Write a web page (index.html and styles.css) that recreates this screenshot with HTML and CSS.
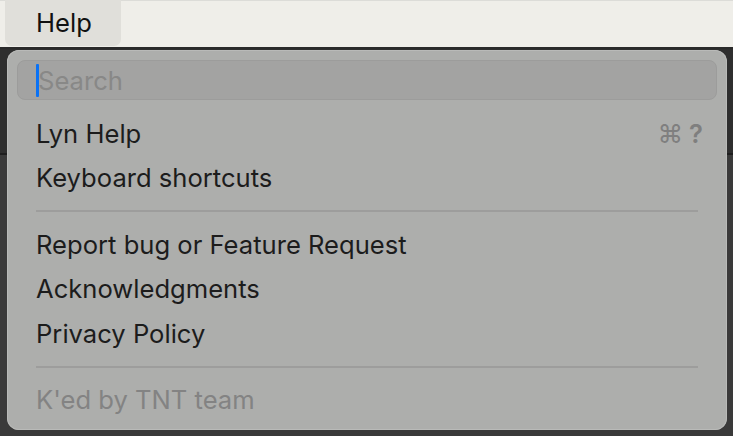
FILE: index.html
```html
<!DOCTYPE html>
<html>
<head>
<meta charset="utf-8">
<link rel="stylesheet" href="styles.css">
</head>
<body>
<div class="screen">
  <div class="menubar">
    <div class="menu-title">Help</div>
  </div>
  <div class="backdrop">
    <div class="panel">
      <div class="search">
        <span class="caret"></span>
        <span class="placeholder">Search</span>
      </div>
      <div class="group">
        <div class="item"><span class="label">Lyn Help</span><span class="shortcut"><span class="key">⌘</span><span class="key">?</span></span></div>
        <div class="item"><span class="label">Keyboard shortcuts</span></div>
      </div>
      <div class="sep"></div>
      <div class="group">
        <div class="item"><span class="label">Report bug or Feature Request</span></div>
        <div class="item"><span class="label">Acknowledgments</span></div>
        <div class="item"><span class="label">Privacy Policy</span></div>
      </div>
      <div class="sep"></div>
      <div class="group">
        <div class="item disabled"><span class="label">K'ed by TNT team</span></div>
      </div>
    </div>
  </div>
</div>
</body>
</html>
```
FILE: styles.css
```css
html, body {
  margin: 0;
  padding: 0;
}
body {
  width: 733px;
  height: 436px;
  overflow: hidden;
  background: #333333;
  font-family: Inter, "Liberation Sans", sans-serif;
}
.screen {
  display: flex;
  flex-direction: column;
  height: 436px;
}
.menubar {
  background: #efeee9;
  border-top: 1px solid #dcdcd8;
  border-bottom: 2px solid #2a2a2a;
  box-sizing: border-box;
  height: 49px;
  display: flex;
  padding-left: 5px;
}
.menu-title {
  width: 116px;
  height: 46px;
  margin-top: -1px;
  background: #e0dfda;
  border-radius: 0 0 7px 7px;
  box-sizing: border-box;
  padding-left: 31px;
  font-size: 25.6px;
  line-height: 46px;
  color: #111;
}
.backdrop {
  flex: 1;
  padding: 1px 6px 6px 7px;
  background: linear-gradient(to bottom, #2e2e2e 0, #2e2e2e 104px, #1e1e1e 104px, #1e1e1e 106px, #3a3a3a 106px);
}
.panel {
  height: 100%;
  box-sizing: border-box;
  background: #adaeac;
  border-radius: 12px;
  box-shadow: inset 0 0 0 1px #b9bab8;
  padding: 10px 10px 0 10px;
}
.search {
  height: 40px;
  box-sizing: border-box;
  background: #a3a3a2;
  border: 1px solid #9c9c9b;
  border-radius: 8px;
  display: flex;
  align-items: center;
  padding-left: 18px;
  margin-bottom: 11px;
}
.caret {
  width: 3px;
  height: 33px;
  background: #0a72f5;
  border-radius: 1px;
}
.placeholder {
  font-size: 25.6px;
  color: #888887;
  margin-left: -1px;
}
.item {
  display: flex;
  align-items: center;
  justify-content: space-between;
  height: 44.5px;
  padding: 0 14px 0 19px;
  font-size: 25.6px;
  color: #1c1c1c;
}
.item.disabled {
  color: #838383;
}
.shortcut {
  display: flex;
  gap: 6px;
  color: #7f7f7f;
  font-size: 25.6px;
}
.key:last-child {
  font-weight: 600;
}
.sep {
  height: 2px;
  background: #9d9d9c;
  margin: 10px 19px 10px 19px;
}
```
